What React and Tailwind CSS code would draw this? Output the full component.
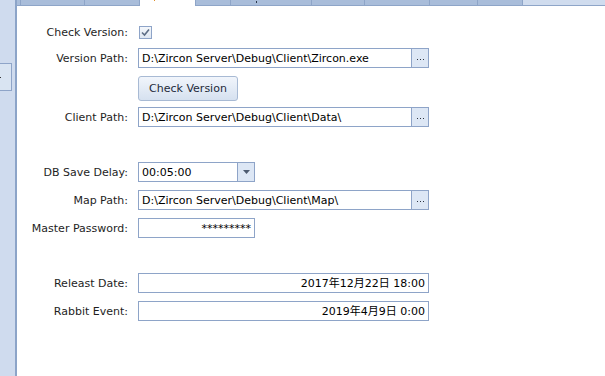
import React from "react";

const tabs = [4, 64, 55, 56, 35, 81, 53, 65, 48, 45];

function Ellipsis() {
  return (
    <div className="w-[17px] h-full border-l border-[#8ea4c8] bg-[#dde7f5] flex items-center justify-center pt-[3px] gap-[2px]">
      <span className="w-[1px] h-[1px] bg-[#2b3340]" />
      <span className="w-[1px] h-[1px] bg-[#2b3340]" />
      <span className="w-[1px] h-[1px] bg-[#2b3340]" />
    </div>
  );
}

function Row({ label, className = "", children }) {
  return (
    <div className={"flex items-center h-[20px] " + className}>
      <div className="w-[111px] text-right text-[#1e1e1e] whitespace-nowrap">{label}</div>
      <div className="ml-[10px] h-full flex items-center">{children}</div>
    </div>
  );
}

function PathBox({ value }) {
  return (
    <div className="w-[291px] h-[20px] border border-[#8ea4c8] bg-white flex">
      <div className="flex-1 pl-[3px] flex items-center text-black whitespace-nowrap overflow-hidden">{value}</div>
      <Ellipsis />
    </div>
  );
}

export default function App() {
  return (
    <div className="flex h-screen bg-white text-[11px] leading-none font-['DejaVu_Sans','Noto_Sans_CJK_SC',sans-serif]">
      {/* left strip */}
      <div className="w-[17px] bg-[#cfdbee] border-r-2 border-[#8ca4c8] flex flex-col">
        <div className="mt-[63px] w-[12px] h-[28px] border border-l-0 border-[#8ea4c8] bg-[#d9e4f2] flex items-center">
          <span className="w-[1px] h-[1px] bg-[#333]" />
        </div>
      </div>

      <div className="flex-1 flex flex-col">
        {/* tab strip */}
        <div className="flex h-[6px]">
          {tabs.map((w, i) =>
            i === 3 ? (
              <div key={i} style={{ width: w }} className="h-full bg-white border-r border-[#8ea5c8] flex">
                <span className="ml-[14px] w-[1px] h-[1px] bg-[#e0902a]" />
              </div>
            ) : (
              <div key={i} style={{ width: w }} className="h-full bg-[#a9bdda] border-r border-b border-[#8ea5c8] flex">
                {i === 5 && <span className="ml-[25px] mt-[1px] w-[1px] h-[2px] bg-[#2a3548]" />}
              </div>
            )
          )}
          <div className="flex-1 h-full bg-[#d0dcee] border-b border-[#8ea5c8]" />
        </div>

        {/* form */}
        <div className="flex flex-col pt-[16px]">
          <Row label="Check Version:">
            <div className="ml-[1px] w-[13px] h-[13px] border border-[#8ea4c8] bg-linear-to-b from-[#f4f7fb] to-[#dfe7f2] flex items-center justify-center">
              <svg width="9" height="9" viewBox="0 0 9 9">
                <path d="M1 4.5 L3.5 7 L8 1.5" fill="none" stroke="#5d6d85" strokeWidth="1.6" />
              </svg>
            </div>
          </Row>

          <Row label="Version Path:" className="mt-[6px]">
            <PathBox value="D:\Zircon Server\Debug\Client\Zircon.exe" />
          </Row>

          <div className="mt-[8px] ml-[121px]">
            <button className="w-[100px] h-[25px] rounded-[3px] border border-[#a8bad4] bg-linear-to-b from-[#f1f5fb] to-[#d6e1f0] text-[#1e2a3a] text-[11px]">
              Check Version
            </button>
          </div>

          <Row label="Client Path:" className="mt-[6px]">
            <PathBox value="D:\Zircon Server\Debug\Client\Data\" />
          </Row>

          <Row label="DB Save Delay:" className="mt-[35px]">
            <div className="w-[117px] h-[20px] border border-[#8ea4c8] bg-white flex">
              <div className="flex-1 pl-[3px] flex items-center text-black">00:05:00</div>
              <div className="w-[17px] h-full border-l border-[#8ea4c8] bg-[#dde7f5] flex items-center justify-center">
                <svg width="7" height="4" viewBox="0 0 7 4">
                  <path d="M0 0 H7 L3.5 4 Z" fill="#4d5b70" />
                </svg>
              </div>
            </div>
          </Row>

          <Row label="Map Path:" className="mt-[8px]">
            <PathBox value="D:\Zircon Server\Debug\Client\Map\" />
          </Row>

          <Row label="Master Password:" className="mt-[8px]">
            <div className="w-[117px] h-[20px] border border-[#8ea4c8] bg-white flex items-center justify-end pr-[3px] text-black">
              *********
            </div>
          </Row>

          <Row label="Releast Date:" className="mt-[35px]">
            <div className="w-[291px] h-[20px] border border-[#8ea4c8] bg-white flex items-center justify-end pr-[3px] text-black">
              2017年12月22日 18:00
            </div>
          </Row>

          <Row label="Rabbit Event:" className="mt-[8px]">
            <div className="w-[291px] h-[20px] border border-[#8ea4c8] bg-white flex items-center justify-end pr-[3px] text-black">
              2019年4月9日 0:00
            </div>
          </Row>
        </div>
      </div>
    </div>
  );
}
